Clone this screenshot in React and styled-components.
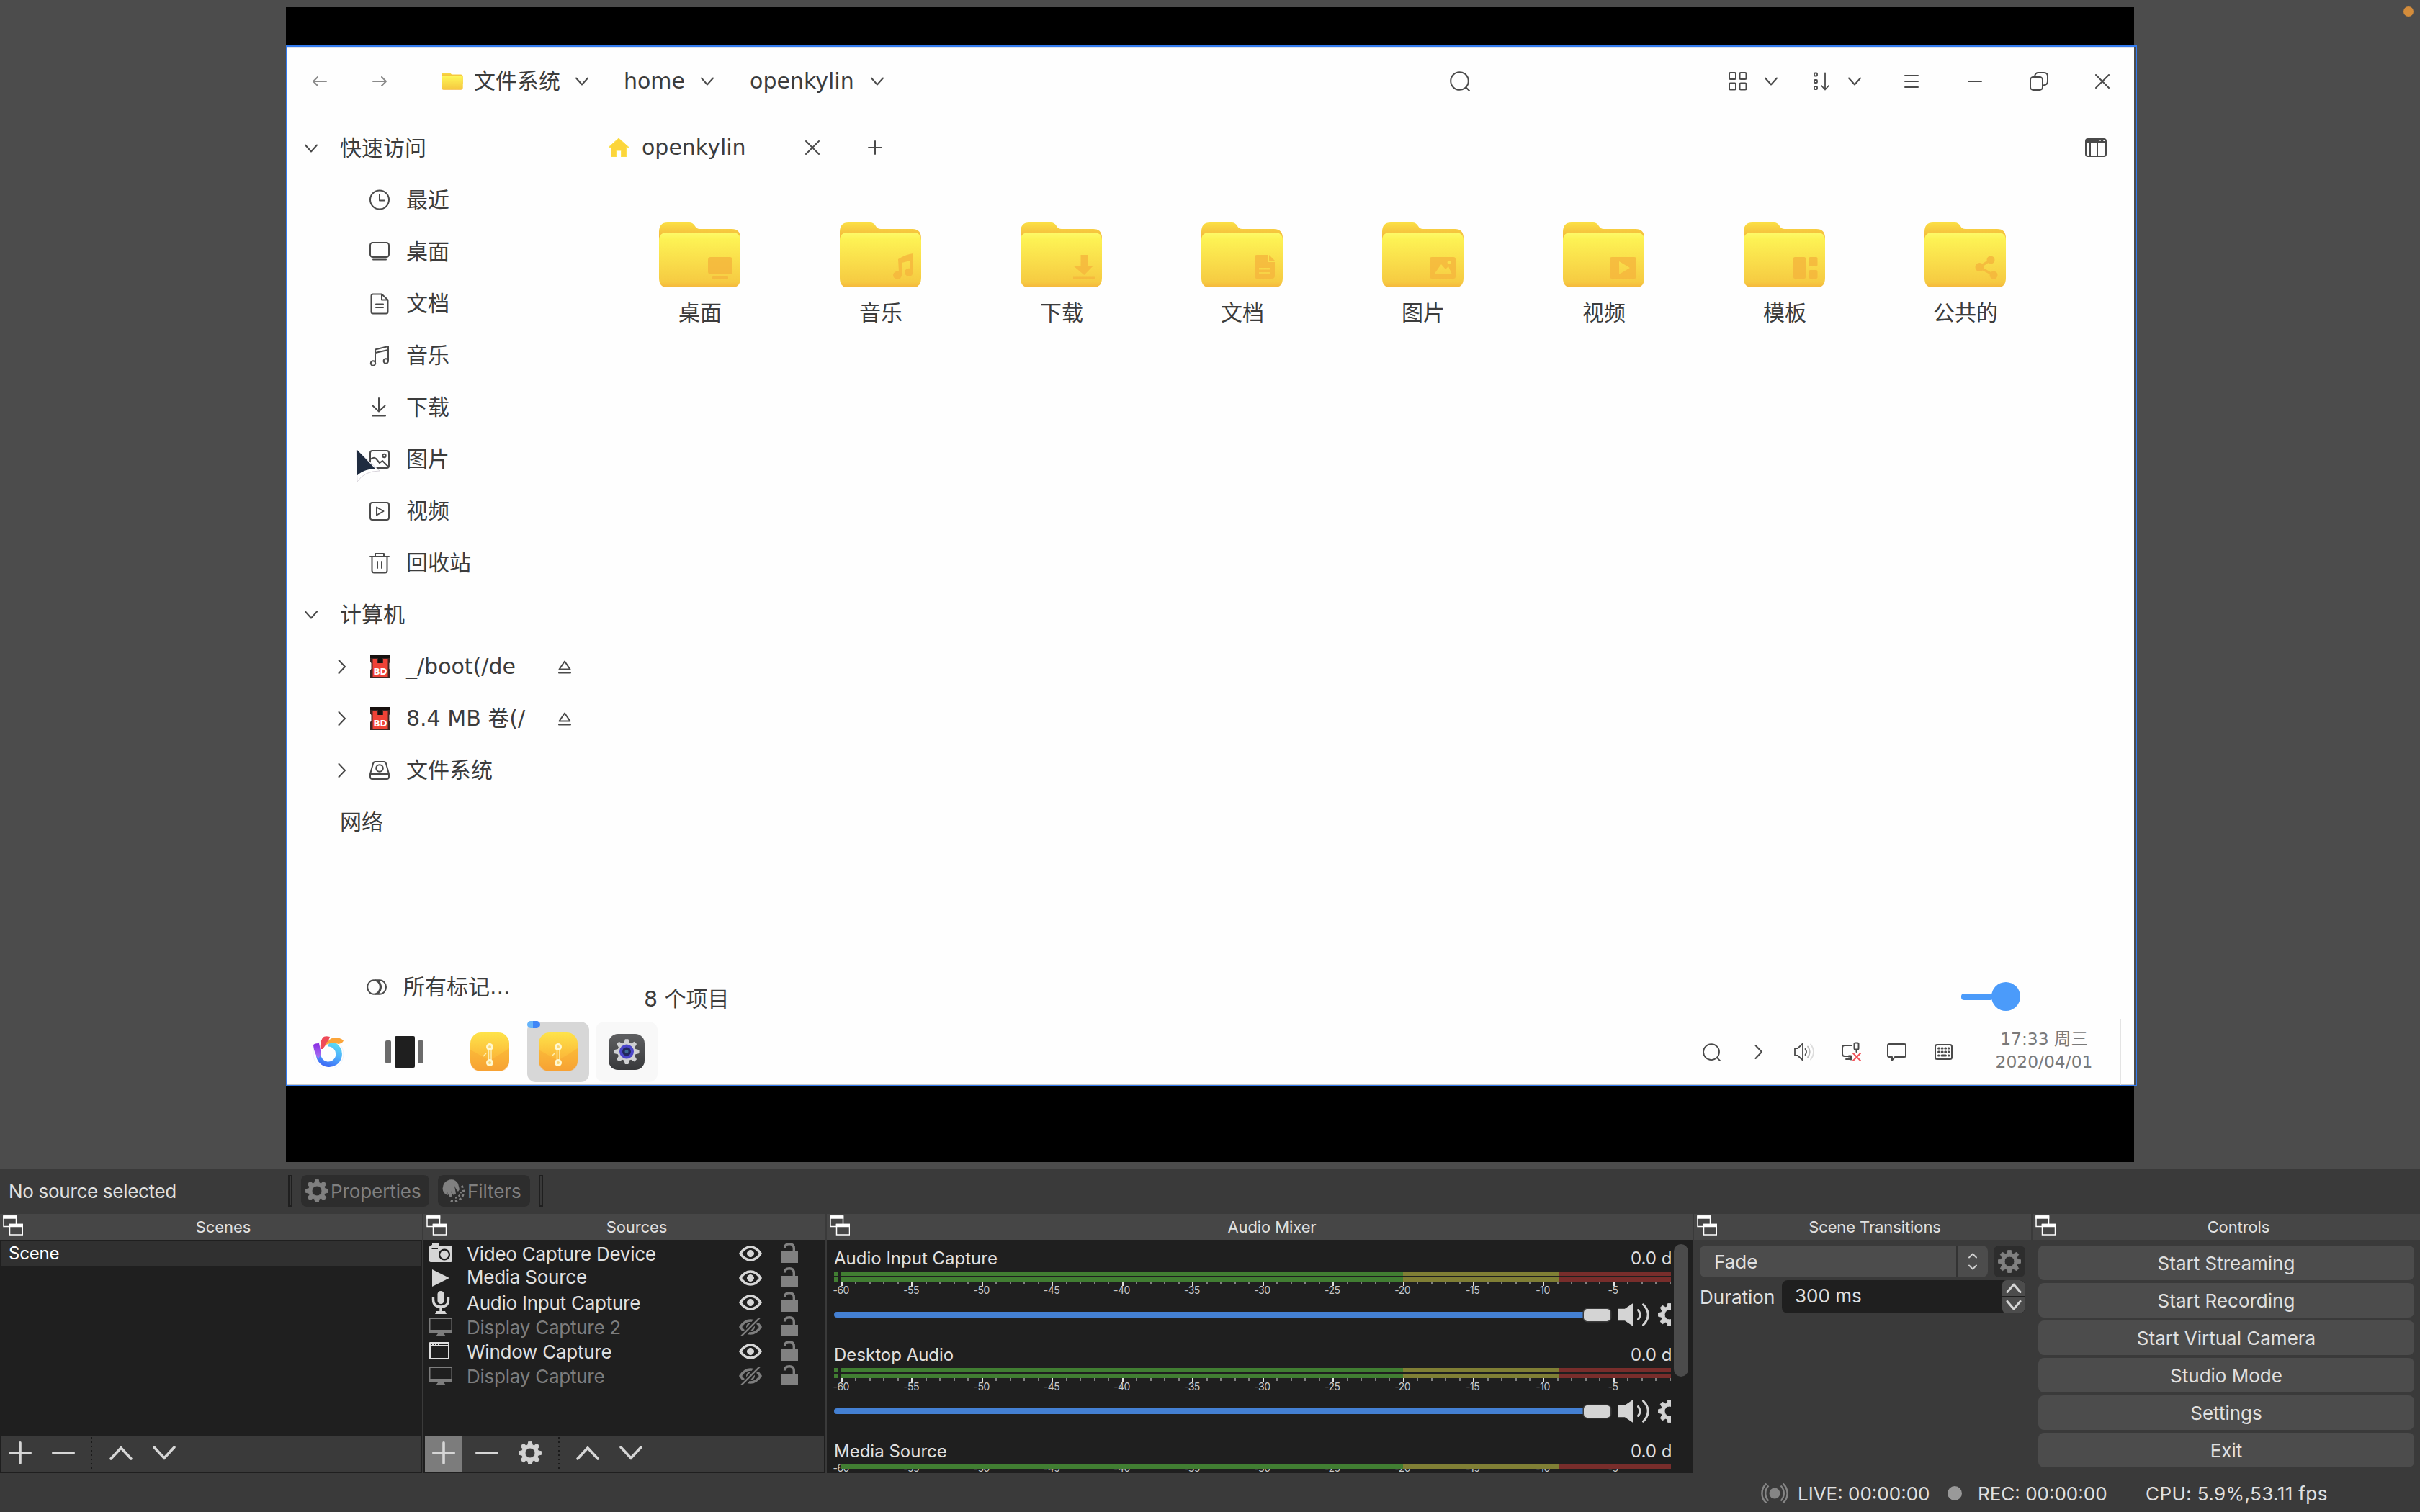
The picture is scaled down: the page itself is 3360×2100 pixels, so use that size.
import React from "react";
import styled, { createGlobalStyle } from "styled-components";

const GlobalStyle = createGlobalStyle`
  * { box-sizing: border-box; }
  body { margin: 0; background: #3a3a3a; }
  svg { display: block; flex: none; }
`;

/* ---------- shell ---------- */

const Screen = styled.div`
  width: 3360px;
  height: 2100px;
  display: flex;
  flex-direction: column;
  background: #3a3a3a;
  color: #e0e0e0;
  font-family: Inter, "Liberation Sans", sans-serif;
  font-size: 26px;
  overflow: hidden;
  position: relative;
  white-space: nowrap;
`;
const PrivacyDot = styled.span`
  position: absolute;
  top: 9px;
  right: 9px;
  width: 14px;
  height: 14px;
  border-radius: 50%;
  background: #d38c3b;
`;
const Preview = styled.section`
  height: 1624px;
  flex: none;
  background: #4c4c4c;
  padding: 10px 0 0 397px;
`;
const Canvas = styled.div`
  width: 2566px;
  height: 1604px;
  background: #000;
  padding-top: 53px;
`;
const Selection = styled.div`
  width: 2570px;
  height: 1446px;
  border: 2px solid #327bf0;
  background: #4c4c4c;
  padding-right: 2px;
`;

/* ---------- captured desktop ---------- */

const Desktop = styled.div`
  height: 1442px;
  background: #fefefe;
  box-shadow: inset 0 1px 0 #dfe3ec, inset 0 -1px 0 #c8c8c8;
  display: flex;
  flex-direction: column;
  font-family: "DejaVu Sans", "Noto Sans CJK SC", sans-serif;
  font-size: 30px;
  line-height: 36px;
  color: #3c3c3c;
`;
const TitleBar = styled.div`
  height: 105px;
  padding: 0 34px 9px 35px;
  display: flex;
  align-items: center;
`;
const Gap = styled.span`
  flex: none;
  width: ${(p) => p.$w}px;
`;
const Spacer = styled.span`
  flex: 1;
`;
const Body = styled.div`
  flex: 1;
  display: flex;
  min-height: 0;
`;
const Sidebar = styled.nav`
  width: 440px;
  display: flex;
  flex-direction: column;
`;
const Group = styled.div`
  height: 72px;
  display: flex;
  align-items: center;
  padding-left: 24px;
`;
const GroupToggle = styled.span`
  width: 49px;
`;
const Place = styled.div`
  height: 72px;
  display: flex;
  align-items: center;
  padding-left: 70px;
`;
const PlaceToggle = styled.span`
  width: 44px;
`;
const PlaceIcon = styled.span`
  width: 51px;
  position: relative;
`;
const PlaceName = styled.span`
  width: 211px;
`;
const Tags = styled(Group)`
  margin-top: auto;
  margin-bottom: 8px;
  padding-left: 110px;
  gap: 21px;
`;
const Pointer = styled.span`
  position: absolute;
  left: -19px;
  top: -1px;
`;
const Files = styled.div`
  flex: 1;
  display: flex;
  flex-direction: column;
`;
const TabBar = styled.div`
  height: 69px;
  display: flex;
  align-items: center;
  padding: 0 38px 0 5px;
`;
const FolderGrid = styled.div`
  display: grid;
  grid-template-columns: repeat(8, 251px);
  padding: 69px 0 0 7px;
`;
const FolderCell = styled.div`
  display: flex;
  flex-direction: column;
  align-items: center;
`;
const FolderName = styled.span`
  line-height: 40px;
  margin: 15px 0 0 1px;
`;
const FileStatus = styled.div`
  margin-top: auto;
  height: 62px;
  display: flex;
  align-items: center;
  justify-content: space-between;
  padding: 0 158px 0 55px;
`;
const ItemCount = styled.span`
  padding-top: 7px;
`;
const ZoomSlider = styled.div`
  display: flex;
  align-items: center;
`;
const ZoomTrack = styled.span`
  width: 44px;
  height: 9px;
  border-radius: 4px;
  margin-right: -2px;
  background: #4b9bfa;
`;
const ZoomKnob = styled.span`
  width: 40px;
  height: 40px;
  border-radius: 50%;
  background: #4b9bfa;
`;
const Taskbar = styled.div`
  height: 92px;
  display: flex;
  align-items: center;
  padding-left: 35px;
`;
const TaskTile = styled.div`
  width: 86px;
  height: 84px;
  border-radius: 12px;
  display: flex;
  align-items: center;
  justify-content: center;
  background: ${(p) => p.$bg || "transparent"};
  margin-right: ${(p) => p.$mr || 0}px;
  position: relative;
`;
const RunningDots = styled.span`
  position: absolute;
  left: 0;
  top: -1px;
  width: 18px;
  height: 10px;
  border-radius: 5px;
  background: linear-gradient(90deg, #66b4fa 45%, #3f86f7 45%);
`;
const Clock = styled.div`
  width: 180px;
  margin-right: 16px;
  text-align: center;
  font-size: 23.4px;
  line-height: 32px;
  color: #7a7a7a;
  padding-bottom: 5px;
`;
const ShowDesktop = styled.span`
  align-self: stretch;
  width: 19px;
  border-left: 1px solid #e4e4e4;
`;

/* ---------- source toolbar ---------- */

const ContextBar = styled.div`
  height: 62px;
  flex: none;
  display: flex;
  align-items: center;
  padding: 0 0 2px 12px;
`;
const ContextLabel = styled.span`
  width: 388px;
  letter-spacing: -0.3px;
`;
const Grip = styled.span`
  width: 6px;
  height: 44px;
  border: 2px solid #1f1f1f;
`;
const DisabledButton = styled.button`
  width: ${(p) => p.$w}px;
  height: 44px;
  margin: ${(p) => p.$m || "0"};
  padding: 0 0 0 6px;
  border: 0;
  border-radius: 8px;
  background: #2d2d2d;
  color: #808080;
  font: inherit;
  letter-spacing: -0.1px;
  display: flex;
  align-items: center;
  gap: 3px;
`;

/* ---------- docks ---------- */

const Docks = styled.div`
  height: 360px;
  flex: none;
  display: grid;
  grid-template-columns: 586px 558px 1202px 468px 538px;
  column-gap: 2px;
`;
const Dock = styled.section`
  display: flex;
  flex-direction: column;
  min-width: 0;
  height: 360px;
`;
const DockHeader = styled.header`
  height: 36px;
  flex: none;
  background: #464646;
  display: flex;
  padding: 2px 0 0 4px;
`;
const DockTitle = styled.span`
  flex: 1;
  margin-left: 2px;
  text-align: center;
  font-size: 22px;
  letter-spacing: -0.1px;
  line-height: 32px;
`;
const DarkBody = styled.div`
  flex: 1;
  min-height: 0;
  background: #1f1f1f;
  padding: 2px;
  display: flex;
  flex-direction: column;
`;
const SceneItem = styled.div`
  height: 34px;
  line-height: 34px;
  padding-left: 10px;
  background: #303030;
  color: #fff;
  font-size: 24px;
  letter-spacing: -0.2px;
`;
const ToolRow = styled.div`
  height: 50px;
  margin-top: auto;
  background: #3a3a3a;
  display: flex;
  align-items: center;
`;
const ToolButton = styled.button`
  width: ${(p) => p.$w || 60}px;
  height: 50px;
  padding: 0 0 2px;
  border: 0;
  background: ${(p) => (p.$on ? "#7c7c7c" : "transparent")};
  display: flex;
  align-items: center;
  justify-content: center;
`;
const DotRule = styled.span`
  width: 2px;
  height: 46px;
  margin: 0 9px;
  background: repeating-linear-gradient(#1a1a1a 0 2px, transparent 2px 6px);
`;
const SourceRow = styled.div`
  height: 34px;
  display: flex;
  align-items: center;
  padding-left: 6px;
  color: ${(p) => (p.$hidden ? "#7d7d7d" : "#e0e0e0")};
`;
const SourceName = styled.span`
  width: 378px;
  margin-left: 20px;
  line-height: 34px;
  letter-spacing: -0.25px;
  margin-top: ${(p) => (p.$raise ? "-2px" : "1px")};
`;
const EyeSlot = styled.span`
  margin-top: -1px;
`;
const LockSlot = styled.span`
  margin-left: 26px;
  margin-top: -3px;
`;

/* ---------- mixer ---------- */

const MixerBody = styled.div`
  flex: 1;
  min-height: 0;
  background: #1f1f1f;
  display: flex;
`;
const Strips = styled.div`
  width: 1172px;
  height: 322px;
  padding: 10px 0 0 10px;
  overflow: hidden;
`;
const Strip = styled.div`
  width: 1210px;
  height: 134px;
  font-size: 24px;
`;
const StripHead = styled.div`
  display: flex;
  height: 34px;
  line-height: 32px;
`;
const StripName = styled.span`
  width: 1106px;
`;
const Meter = styled.div`
  display: flex;
  flex-direction: column;
  gap: 2px;
  position: relative;
  z-index: 1;
`;
const MeterBar = styled.div`
  height: 6px;
  width: 1190px;
  background: ${(p) =>
    p.$solid
      ? "linear-gradient(90deg, transparent 10px, #417e32 10px 790px, #807f35 790px 1006px, #782d2b 1006px)"
      : "linear-gradient(90deg, #417e32 6px, #1f1f1f 6px 10px, #417e32 10px 790px, #807f35 790px 1006px, #782d2b 1006px)"};
`;
const ScaleLabels = styled.div`
  display: flex;
  margin-left: -39px;
  margin-top: ${(p) => (p.$under ? "-7px" : "-2px")};
  font-size: 14px;
  line-height: 12px;
  letter-spacing: -0.5px;
  color: #c8c8c8;
`;
const ScaleLabel = styled.span`
  width: 97.45px;
  flex: none;
  text-align: center;
`;
const VolumeRow = styled.div`
  display: flex;
  align-items: center;
  height: 32px;
  margin-top: 12px;
`;
const VolumeTrack = styled.span`
  width: 1041px;
  height: 8px;
  border-radius: 4px 0 0 4px;
  background: #4480d3;
`;
const VolumeKnob = styled.span`
  width: 37px;
  height: 17px;
  border-radius: 5px;
  background: #d4d4d4;
  box-shadow: 0 0 0 1.5px #3a3a3a;
  margin-right: 10px;
`;
const ScrollThumb = styled.span`
  width: 20px;
  height: 184px;
  margin: 6px 0 0 4px;
  border-radius: 10px;
  background: #4b4b4b;
`;

/* ---------- transitions and controls ---------- */

const TransitionBody = styled.div`
  padding: 8px 8px 0;
  display: flex;
  flex-direction: column;
  gap: 4px;
`;
const FormRow = styled.div`
  display: flex;
`;
const Combo = styled.div`
  width: 400px;
  height: 44px;
  margin-right: 8px;
  border-radius: 8px;
  background: #4c4c4c;
  display: flex;
  line-height: 45px;
  padding-left: 20px;
`;
const ComboValue = styled.span`
  width: 338px;
  border-right: 2px solid #333;
`;
const ComboArrow = styled.span`
  flex: 1;
  display: flex;
  align-items: center;
  justify-content: center;
`;
const FieldLabel = styled.span`
  width: 114px;
  line-height: 48px;
`;
const SpinBox = styled.div`
  width: 338px;
  height: 46px;
  border-radius: 8px;
  overflow: hidden;
  background: #1f1f1f;
  display: flex;
  line-height: 43px;
  padding-left: 18px;
`;
const SpinValue = styled.span`
  flex: 1;
`;
const SpinButtons = styled.span`
  width: 32px;
  display: flex;
  flex-direction: column;
  gap: 2px;
`;
const SpinButton = styled.span`
  height: 22px;
  background: #4c4c4c;
  border-radius: ${(p) => (p.$up ? "6px 8px 0 0" : "0 0 8px 6px")};
  display: flex;
  align-items: center;
  justify-content: center;
`;
const ControlList = styled.div`
  padding: 8px;
  display: flex;
  flex-direction: column;
  gap: 4px;
`;
const ControlButton = styled.button`
  height: 48px;
  padding: 0 0 0;
  border: 0;
  border-radius: 8px;
  background: #4c4c4c;
  color: #e0e0e0;
  font: inherit;
`;
const StatusBar = styled.footer`
  height: 54px;
  display: flex;
  align-items: center;
  padding: 2px 0 0 2445px;
  line-height: 40px;
`;
const StatusText = styled.span`
  width: ${(p) => p.$w}px;
  letter-spacing: ${(p) => p.$ls || 0}px;
  padding-top: 1px;
`;
const RecDot = styled.span`
  width: 20px;
  height: 20px;
  margin-right: 22px;
  border-radius: 50%;
  background: #999;
`;

/* ---------- icons ---------- */

const Line = ({ w = 30, h = 30, c = "#4a4a4a", sw = 2, children }) => (
  <svg width={w} height={h} viewBox={`0 0 ${w} ${h}`} fill="none" stroke={c} strokeWidth={sw} strokeLinejoin="round" strokeLinecap="round">
    {children}
  </svg>
);

const gearPath = (() => {
  const pts = [];
  for (let i = 0; i < 8; i++) {
    [[-0.29, 11.6], [-0.13, 16], [0.13, 16], [0.29, 11.6]].forEach(([da, r]) => {
      const a = (i * Math.PI) / 4 + da;
      pts.push(`${(16 + r * Math.sin(a)).toFixed(2)} ${(16 - r * Math.cos(a)).toFixed(2)}`);
    });
  }
  return `M${pts.join("L")}Z M16 9a7 7 0 1 0 0 14a7 7 0 1 0 0-14Z`;
})();
const Gear = ({ c = "#d2d2d2", s = 32 }) => (
  <svg width={s} height={s} viewBox="0 0 32 32" fill={c} stroke={c} strokeWidth="1" strokeLinejoin="round">
    <path fillRule="evenodd" d={gearPath} />
  </svg>
);
const ChevDown = () => <Line w={18} h={12}><path d="M1 1.5L9 10.5L17 1.5" /></Line>;
const ChevRight = () => <Line w={12} h={20}><path d="M1.500 1L10 10L1.500 19" /></Line>;
const Cross = () => <Line w={20} h={20}><path d="M1 1L19 19M19 1L1 19" /></Line>;
const Magnifier = ({ s = 28 }) => (
  <svg width={s} height={s} viewBox="0 0 28 28" fill="none" stroke="#4a4a4a" strokeWidth="2" strokeLinecap="round">
    <circle cx="13.5" cy="13.5" r="12.3" />
    <path d="M22.5 22.5L27 27" />
  </svg>
);
const ArrowLeft = () => <Line w={20} h={14} c="#8a8a8a"><path d="M1 7H19M7 1L1 7L7 13" /></Line>;
const ArrowRight = () => <Line w={20} h={14} c="#8a8a8a"><path d="M1 7H19M13 1L19 7L13 13" /></Line>;
const Eject = () => <Line w={18} h={19}><path d="M9 1.5L16.5 12.5H1.5ZM1 17.5H17" /></Line>;

const placeIcons = {
  clock: <Line w={28}><circle cx="14" cy="14.500" r="13" /><path d="M14 7V15.500H21" /></Line>,
  screen: <Line w={28} h={28}><rect x="1" y="1" width="26" height="20" rx="3.5" /><path d="M5 24.500H23" /></Line>,
  doc: <Line w={28}><path d="M4.500 1.500H17L25.500 9.500V26Q25.500 28.500 23 28.500H5Q2.500 28.500 2.500 26V4Q2.500 1.500 5 1.500M17 1.500V9.500H25.500M9 15.500H19M9 20H19" /></Line>,
  music: <Line w={28}><path d="M8 25V6.500L26 2V22M8 11L26 7" /><circle cx="5" cy="25.500" r="3.200" /><circle cx="22.800" cy="22.500" r="3.200" /></Line>,
  down: <Line w={28} h={28}><path d="M13 1V19M4.500 11.500L13 19.500L21.500 11.500M4 25.500H22" /></Line>,
  picture: <Line w={28} h={26}><rect x="1" y="1" width="26" height="24" rx="3" /><circle cx="20.500" cy="8" r="2.200" /><path d="M1 13Q6 9 9 12L14 18L18 15L22 19L26 23" /></Line>,
  video: <Line w={28} h={26}><rect x="1" y="1" width="26" height="24" rx="3" /><path d="M10 7.500L19.500 13L10 18.500Z" /></Line>,
  trash: <Line w={28}><path d="M1 6H27M3.500 6V25.500Q3.500 28.500 6.500 28.500H21.500Q24.500 28.500 24.500 25.500V6M8 6V2H20V6M11 13V22M17 13V22" /></Line>,
  disk: <Line w={28} h={26}><path d="M1 18L5 3.500Q5.700 1 8 1H20Q22.300 1 23 3.500L27 18V22Q27 25 24 25H4Q1 25 1 22ZM1.500 18H26.500" /><circle cx="14" cy="10" r="4.800" /></Line>,
};

const SdCard = () => (
  <svg width="30" height="34" viewBox="0 0 30 34">
    <path d="M1 1H29V10L27.500 12V20L29 22V33H1V22L2.500 20V12L1 10Z" fill="#3f2623" />
    <path d="M4.500 6H10V12H19V6H25.500V31H4.500Z" fill="#ef4236" />
    <rect x="1" y="1" width="28" height="4" fill="#17110f" />
    <rect x="12" y="5" width="5" height="7" fill="#17110f" />
    <text x="15" y="28" textAnchor="middle" fontFamily="DejaVu Sans" fontWeight="bold" fontSize="12" fill="#fff">BD</text>
  </svg>
);

const emblems = {
  desktop: <><rect x="68" y="49" width="34" height="24" rx="4" /><rect x="74" y="76" width="22" height="3.500" rx="1" /></>,
  music: <path d="M81 52Q92 45 102 44V70A6 5.500 0 1 1 98 65V54L86 57V74A6 5.500 0 1 1 82 69Z" />,
  download: <path d="M83.500 46H93V61H101L88.300 74L73 61H83.500ZM73 76.500H104V79.500H73Z" />,
  document: <path fillRule="evenodd" d="M77 46H92V56H102V75Q102 79 98 79H77Q74 79 74 75V49Q74 46 77 46ZM94 46L102 54H94ZM80 64H96V66.500H80ZM80 70H96V72.500H80Z" />,
  picture: <path fillRule="evenodd" d="M69 49H99Q102 49 102 52V76Q102 79 99 79H69Q66 79 66 76V52Q66 49 69 49ZM72 73L82 59L88 66L92 62L97 73ZM93 54a2.500 2.500 0 1 0 .1 0Z" />,
  video: <path fillRule="evenodd" d="M68 49H99Q102 49 102 52V76Q102 79 99 79H68Q65 79 65 76V52Q65 49 68 49ZM78 55V73L93 64Z" />,
  template: <><rect x="69" y="49" width="17" height="30" rx="2" /><rect x="90.500" y="49" width="12" height="13" rx="2" /><rect x="90.500" y="67" width="12" height="12" rx="2" /></>,
  share: <><circle cx="76.500" cy="63" r="6" /><circle cx="92" cy="53" r="5.500" /><circle cx="96" cy="74" r="5.500" /><path d="M76 63L92 53M76 63L96 74" stroke="#f5b53c" strokeWidth="3.500" /></>,
};

const Folder = ({ kind, id, w = 114, h = 92 }) => (
  <svg width={w} height={h} viewBox="0 0 114 92" preserveAspectRatio="none">
    <defs>
      <linearGradient id={`back-${id}`} x1="0" y1="0" x2="0" y2="1">
        <stop offset="0" stopColor="#fbdf45" />
        <stop offset="0.3" stopColor="#f4bd3b" />
        <stop offset="1" stopColor="#f4bd3b" />
      </linearGradient>
      <linearGradient id={`front-${id}`} x1="0" y1="0" x2="0" y2="1">
        <stop offset="0" stopColor="#fdfa6a" />
        <stop offset="0.12" stopColor="#fdf254" />
        <stop offset="0.9" stopColor="#f6cb42" />
        <stop offset="1" stopColor="#f5b73c" />
      </linearGradient>
    </defs>
    <path d="M0 14Q0 1 12 1H42Q47 1 50 6Q52 10 57 10H101Q113 10 113 23V60H0Z" fill={`url(#back-${id})`} />
    <path d="M0 26Q0 15 11 15H102Q113 15 113 26V78Q113 91 102 91H11Q0 91 0 78Z" fill={`url(#front-${id})`} />
    <g fill="#f5b53c" opacity="0.8">{emblems[kind]}</g>
  </svg>
);

const HomeIcon = () => (
  <svg width="30" height="26" viewBox="0 0 30 26">
    <path d="M15 0L29 12.500H25.500V26H18.500V17H11.500V26H4.500V12.500H1Z" fill="#fcd53c" stroke="#fce14e" strokeLinejoin="round" />
  </svg>
);
const KylinLogo = () => (
  <svg width="44" height="46" viewBox="0 0 44 46" fill="none">
    <defs>
      <linearGradient id="ring" x1="0.700" y1="0" x2="0.300" y2="1">
        <stop offset="0" stopColor="#5ee0f2" />
        <stop offset="0.45" stopColor="#4fb2fb" />
        <stop offset="1" stopColor="#3c63f6" />
      </linearGradient>
      <linearGradient id="petal" x1="0" y1="0" x2="0" y2="1">
        <stop offset="0" stopColor="#8a2be2" />
        <stop offset="1" stopColor="#a97bf5" />
      </linearGradient>
    </defs>
    <circle cx="22" cy="26" r="21" stroke="#f0f3fb" strokeWidth="1" />
    <path d="M27 8.500A18 18 0 1 1 5 24Q8 20 11.500 24A10.500 10.500 0 1 0 22 15.500Q21 11 27 8.500Z" fill="url(#ring)" />
    <path d="M1 14Q1 11 9 11L12 25Q9 31 8 33Q2 24 1 14Z" fill="url(#petal)" />
    <path d="M14 3Q17 0 24 2Q22 9 14 19L11 19Q10 10 14 3Z" fill="#ee4a58" />
    <path d="M17 14Q22 4 31 3Q38 3 43 7Q42 11 36 12Q27 8 17 14Z" fill="#fba53a" />
  </svg>
);
const TaskView = () => (
  <svg width="54" height="46" viewBox="0 0 54 46">
    <rect x="0" y="7" width="8" height="32" rx="2" fill="#6b6b6b" />
    <rect x="13" y="1" width="28" height="44" rx="2" fill="#1f1f1f" />
    <rect x="45" y="7" width="8" height="32" rx="2" fill="#6b6b6b" />
  </svg>
);
const FilesApp = ({ id }) => (
  <svg width="54" height="54" viewBox="0 0 54 54">
    <defs>
      <linearGradient id={id} x1="0" y1="0" x2="0" y2="1">
        <stop offset="0" stopColor="#fee34a" />
        <stop offset="0.5" stopColor="#fcc23c" />
        <stop offset="1" stopColor="#f7a236" />
      </linearGradient>
    </defs>
    <rect width="54" height="54" rx="15" fill={`url(#${id})`} />
    <path d="M0 24L27 39L54 22V39Q54 54 39 54H15Q0 54 0 39Z" fill="#f6a032" opacity="0.35" />
    <path d="M25.500 20V42M22 29L18 33M29 20V42" stroke="#fdeeb0" strokeWidth="1.500" fill="none" />
    <circle cx="27" cy="20" r="5" fill="#fff8cf" />
    <circle cx="27" cy="42" r="5" fill="#fff8cf" />
    <circle cx="27" cy="20" r="2" fill="#fbd774" />
    <circle cx="27" cy="42" r="2" fill="#fbd774" />
  </svg>
);
const SettingsApp = () => (
  <svg width="50" height="50" viewBox="0 0 50 50">
    <defs>
      <linearGradient id="prefs" x1="0" y1="0" x2="0" y2="1">
        <stop offset="0" stopColor="#5e5f61" />
        <stop offset="1" stopColor="#38393b" />
      </linearGradient>
    </defs>
    <rect width="50" height="50" rx="13" fill="url(#prefs)" />
    <g transform="translate(7.500 7) scale(1.100)" fill="#cfd0d2"><path fillRule="evenodd" d={gearPath} /></g>
    <circle cx="25" cy="24.500" r="10" fill="#4b46c9" />
    <circle cx="25" cy="24.500" r="6" fill="#20275e" />
    <circle cx="25" cy="24.500" r="2.500" fill="#3c6b93" />
  </svg>
);
const GridView = () => (
  <Line w={26} h={26}>
    <rect x="1" y="1" width="9" height="9" rx="1.500" /><rect x="15.500" y="1" width="9" height="9" rx="1.500" />
    <rect x="1" y="15.500" width="9" height="9" rx="1.500" /><rect x="15.500" y="15.500" width="9" height="9" rx="1.500" />
  </Line>
);
const SortIcon = () => (
  <Line w={24} h={26} sw={1.8}>
    <rect x="1" y="1.500" width="4" height="4" rx="1" /><rect x="1" y="11" width="4" height="4" rx="1" /><rect x="1" y="20" width="4" height="4" rx="1" />
    <path d="M16 1.500V24.500M11 19L16 24.500L21 19" />
  </Line>
);
const Restore = () => (
  <Line w={26} h={26}><rect x="1" y="7" width="17" height="18" rx="4" /><path d="M7 6Q8 1 12 1H20Q25 1 25 6V13Q25 18 19 18.500" /></Line>
);
const Columns = () => (
  <Line w={30} h={26}><rect x="1" y="1" width="28" height="24" rx="3" /><path d="M2 5H28M7 5V25M17 5V25" /><path d="M3 3H19M23 3H24" strokeWidth="3" /></Line>
);
const Speaker = () => (
  <Line w={30} h={26} sw={1.8}>
    <path d="M1 8H5L12 1.500V24.500L5 18H1ZM15.500 9Q18.500 13 15.500 17" />
    <path d="M19 5.500Q24.500 13 19 20.500" stroke="#bbb" /><path d="M23 2.500Q31 13 23 23.500" stroke="#ddd" />
  </Line>
);
const NetworkOff = () => (
  <Line w={28} h={28}>
    <path d="M14 5H4Q1 5 1 8V17Q1 20 4 20H9M6 24H12" /><path d="M10 20H13V24" strokeWidth="3" />
    <rect x="17.500" y="1.500" width="6" height="9" rx="1.500" /><path d="M20.500 11V14" />
    <path d="M16 16L26 26M26 16L16 26" stroke="#f2545b" />
  </Line>
);
const Chat = () => <Line w={27} h={26}><path d="M3 2H24Q26 2 26 4V18Q26 20 24 20H11L7 24.500V20H3Q1 20 1 18V4Q1 2 3 2Z" /></Line>;
const Keyboard = () => (
  <Line w={26} h={22}><rect x="1" y="1" width="23" height="20" rx="2.500" /><path d="M5.500 6H20M5.500 11H20" strokeDasharray="1 3.600" strokeWidth="3" /><path d="M5.500 16H6M10 16H15.500M19.500 16H20" strokeWidth="3" /></Line>
);
const TagIcon = () => <Line w={30} h={22}><ellipse cx="10" cy="11" rx="8.800" ry="9.800" /><path d="M12 1.200H18A9 9.800 0 0 1 18 20.800H12M16 2Q24 11 16 20" /></Line>;
const Arrow = () => (
  <svg width="36" height="46" viewBox="0 0 36 46">
    <path d="M1 1L33 30Q12 30 2 45Z" fill="#fff" stroke="#d9d5dc" />
    <path d="M1 0L27 27Q12 27 1 37Z" fill="#1f2c40" />
  </svg>
);

const PopOut = () => (
  <svg width="28" height="30" viewBox="0 0 28 30" fill="#464646" stroke="#fff" strokeWidth="1.500">
    <rect x="1" y="1" width="17.500" height="14.500" /><rect x="1" y="1" width="17.500" height="3" fill="#fff" />
    <rect x="9.500" y="12.500" width="18" height="14.500" /><rect x="9.500" y="12.500" width="18" height="3" fill="#fff" />
  </svg>
);
const Tool = ({ d }) => (
  <svg width="32" height="32" viewBox="0 0 32 32" fill="none" stroke="#d6d6d6" strokeWidth="3.600" strokeLinecap="round" strokeLinejoin="miter">
    <path d={d} />
  </svg>
);
const PLUS = "M16 1.800V30.200M1.800 16H30.200";
const MINUS = "M1.800 16H30.200";
const UP = "M2 24L16 9L30 24";
const DOWN = "M2 8L16 23L30 8";

const Eye = ({ off }) => (
  <svg width="32" height="24" viewBox="0 0 32 24" fill="none" stroke={off ? "#7d7d7d" : "#d6d6d6"}>
    <path d="M2 12Q8 3 16 3Q24 3 30 12Q24 21 16 21Q8 21 2 12Z" strokeWidth="3.600" strokeLinejoin="round" />
    <circle cx="16" cy="12" r="4.500" fill={off ? "none" : "#d6d6d6"} strokeWidth={off ? 3 : 1} />
    {off && <><path d="M4 26L28 -2" stroke="#1f1f1f" strokeWidth="7" /><path d="M3 25L29 -1" strokeWidth="2.400" /></>}
  </svg>
);
const Lock = () => (
  <svg width="24" height="28" viewBox="0 0 24 28">
    <rect x="0" y="12" width="24" height="16" fill="#818181" />
    <path d="M5.500 7.500Q5.500 1.700 12 1.700Q18.300 1.700 18.300 8V13" fill="none" stroke="#818181" strokeWidth="3.400" />
  </svg>
);
const sourceIcons = {
  camera: <svg width="32" height="28" viewBox="0 0 32 28"><path fillRule="evenodd" fill="#d6d6d6" d="M2 3L4 2V0H13V3H30Q32 3 32 5V24Q32 26 30 26H2Q0 26 0 24V5Q0 3 2 3ZM3.500 6V8H12V6ZM21 7.500a8 8 0 1 0 .1 0Z" /><circle cx="21" cy="15.500" r="5.800" fill="#d6d6d6" /></svg>,
  play: <svg width="32" height="28" viewBox="0 0 32 28"><path d="M4 2L28 14L4 26Z" fill="#d6d6d6" /></svg>,
  mic: <svg width="32" height="32" viewBox="0 0 32 32"><rect x="11.500" y="0" width="9" height="18" rx="4.500" fill="#d6d6d6" /><path d="M5.500 9V12Q5.500 22 16 22Q26.500 22 26.500 12V9M16 22V28" fill="none" stroke="#d6d6d6" strokeWidth="3.400" /><path d="M8 32L10 28H22L24 32Z" fill="#d6d6d6" /></svg>,
  display: <svg width="32" height="28" viewBox="0 0 32 28"><path fillRule="evenodd" fill="#7d7d7d" d="M0 1H32V23H0ZM1.500 3V18H30.500V3ZM12 23H20L23 27H9Z" /></svg>,
  window: <svg width="32" height="26" viewBox="0 0 32 26"><path fillRule="evenodd" fill="#e0e0e0" d="M1 0H27Q28 0 28 1V24H0V1Q0 0 1 0ZM2 6V22H26V6ZM2 2V4H4V2ZM6 2V4H8V2ZM10 2V4H12V2ZM14 2V4H26V2Z" /></svg>,
};
const FilterIcon = () => (
  <svg width="32" height="32" viewBox="0 0 32 32" fill="none" stroke="#808080">
    <path d="M0.500 13Q1 3 10 0.500Q18 -1 22 6L24 14L22 17Q19 14 17 9L19 20L16 22Q12 18 11 12L14 23L11 25Q7 20 6 14L8 22Q1 20 0.500 13Z" fill="#808080" stroke="none" />
    <path d="M27 9A13.500 13.500 0 0 1 9 28.500" strokeWidth="3" strokeDasharray="3.200 3" />
    <path d="M26 17A10 10 0 0 1 16 26" strokeWidth="2.400" strokeDasharray="2.500 2.500" />
  </svg>
);
const Volume = () => (
  <svg width="44" height="32" viewBox="0 0 44 32" fill="none" stroke="#d4d4d4" strokeWidth="3" strokeLinecap="round">
    <path d="M1 8.500H10L21 1V31L10 23.500H1Z" fill="#d4d4d4" strokeWidth="1.500" strokeLinejoin="round" />
    <path d="M28.500 9.500Q33.500 16 28.500 22.500M35.500 1.800Q49 16 35.500 30.200" />
  </svg>
);
const Ticks = () => (
  <svg width="1190" height="8" viewBox="0 0 1190 8" shapeRendering="crispEdges">
    {Array.from({ length: 61 }, (_, i) => (
      <rect key={i} x={Math.round(10 + i * 19.49)} y="0" width="2" height={i % 5 ? 4 : 6} fill={i % 5 ? "#808080" : "#e4e4e4"} />
    ))}
  </svg>
);
const LiveIcon = () => (
  <svg width="38" height="28" viewBox="0 0 38 28" fill="none" stroke="#858585" strokeWidth="2.400">
    <circle cx="19" cy="14" r="7.500" fill="#858585" stroke="none" />
    <path d="M10.500 3.500A15 15 0 0 0 10.500 24.500M27.500 3.500A15 15 0 0 1 27.500 24.500M7.500 0.500A18 18 0 0 0 7.500 27.500M30.500 0.500A18 18 0 0 1 30.500 27.500" />
  </svg>
);

/* ---------- data ---------- */

const quickPlaces = [
  ["clock", "最近"], ["screen", "桌面"], ["doc", "文档"], ["music", "音乐"],
  ["down", "下载"], ["picture", "图片"], ["video", "视频"], ["trash", "回收站"],
];
const folders = [
  ["desktop", "桌面"], ["music", "音乐"], ["download", "下载"], ["document", "文档"],
  ["picture", "图片"], ["video", "视频"], ["template", "模板"], ["share", "公共的"],
];
const sources = [
  { icon: "camera", name: "Video Capture Device" },
  { icon: "play", name: "Media Source", raise: true },
  { icon: "mic", name: "Audio Input Capture" },
  { icon: "display", name: "Display Capture 2", hidden: true },
  { icon: "window", name: "Window Capture" },
  { icon: "display", name: "Display Capture", hidden: true },
];
const scale = [-60, -55, -50, -45, -40, -35, -30, -25, -20, -15, -10, -5];
const controls = ["Start Streaming", "Start Recording", "Start Virtual Camera", "Studio Mode", "Settings", "Exit"];

/* ---------- parts ---------- */

const DockPanel = ({ title, children }) => (
  <Dock>
    <DockHeader><PopOut /><DockTitle>{title}</DockTitle></DockHeader>
    {children}
  </Dock>
);
const Labels = ({ under }) => (
  <ScaleLabels $under={under}>{scale.map((n) => <ScaleLabel key={n}>{n}</ScaleLabel>)}</ScaleLabels>
);
const MixerStrip = ({ name, cut }) => (
  <Strip>
    <StripHead><StripName>{name}</StripName><span>0.0 dB</span></StripHead>
    {cut ? (
      <>
        <Meter><MeterBar $solid /></Meter>
        <Labels under />
      </>
    ) : (
      <>
        <Meter><MeterBar /><MeterBar /></Meter>
        <Ticks />
        <Labels />
        <VolumeRow><VolumeTrack /><VolumeKnob /><Volume /><Gap $w={12} /><Gear /></VolumeRow>
      </>
    )}
  </Strip>
);
const Drive = ({ icon, name, eject }) => (
  <Place>
    <PlaceToggle><ChevRight /></PlaceToggle>
    <PlaceIcon>{icon}</PlaceIcon>
    <PlaceName>{name}</PlaceName>
    {eject && <Eject />}
  </Place>
);

const FileManager = () => (
  <Desktop>
    <TitleBar>
      <ArrowLeft /><Gap $w={63} /><ArrowRight /><Gap $w={76} />
      <Folder id="crumb" w={30} h={24} /><Gap $w={15} />
      <span>文件系统</span><Gap $w={21} /><ChevDown /><Gap $w={49} />
      <span>home</span><Gap $w={22} /><ChevDown /><Gap $w={50} />
      <span>openkylin</span><Gap $w={23} /><ChevDown />
      <Spacer />
      <Magnifier /><Gap $w={359} />
      <GridView /><Gap $w={24} /><ChevDown /><Gap $w={50} />
      <SortIcon /><Gap $w={24} /><ChevDown /><Gap $w={60} />
      <Line w={20} h={20}><path d="M1 2H19M1 10H19M1 18H19" /></Line><Gap $w={68} />
      <Line w={20} h={4}><path d="M1 2H19" /></Line><Gap $w={66} />
      <Restore /><Gap $w={65} /><Cross />
    </TitleBar>
    <Body>
      <Sidebar>
        <Group><GroupToggle><ChevDown /></GroupToggle>快速访问</Group>
        {quickPlaces.map(([icon, name]) => (
          <Place key={name}>
            <PlaceToggle />
            <PlaceIcon>
              {placeIcons[icon]}
              {icon === "picture" && <Pointer><Arrow /></Pointer>}
            </PlaceIcon>
            <PlaceName>{name}</PlaceName>
          </Place>
        ))}
        <Group><GroupToggle><ChevDown /></GroupToggle>计算机</Group>
        <Drive icon={<SdCard />} name="_/boot(/de" eject />
        <Drive icon={<SdCard />} name="8.4 MB 卷(/" eject />
        <Drive icon={placeIcons.disk} name="文件系统" />
        <Group><GroupToggle />网络</Group>
        <Tags><TagIcon /><span>所有标记...</span></Tags>
      </Sidebar>
      <Files>
        <TabBar>
          <HomeIcon /><Gap $w={17} /><span>openkylin</span><Gap $w={82} /><Cross /><Gap $w={67} />
          <Line w={20} h={20}><path d="M10 1V19M1 10H19" /></Line>
          <Spacer /><Columns />
        </TabBar>
        <FolderGrid>
          {folders.map(([kind, name]) => (
            <FolderCell key={kind}><Folder kind={kind} id={kind} /><FolderName>{name}</FolderName></FolderCell>
          ))}
        </FolderGrid>
        <FileStatus>
          <ItemCount>8 个项目</ItemCount>
          <ZoomSlider><ZoomTrack /><ZoomKnob /></ZoomSlider>
        </FileStatus>
      </Files>
    </Body>
    <Taskbar>
      <KylinLogo /><Gap $w={57} /><TaskView /><Gap $w={48} />
      <TaskTile $mr={9}><FilesApp id="files-a" /></TaskTile>
      <TaskTile $bg="#d7d7d7" $mr={9}><RunningDots /><FilesApp id="files-b" /></TaskTile>
      <TaskTile $bg="#f8f8f8"><SettingsApp /></TaskTile>
      <Spacer />
      <Magnifier s={25} /><Gap $w={47} /><ChevRight /><Gap $w={43} />
      <Speaker /><Gap $w={36} /><NetworkOff /><Gap $w={35} />
      <Chat /><Gap $w={39} /><Keyboard /><Gap $w={36} />
      <Clock><div>17:33 周三</div><div>2020/04/01</div></Clock>
      <ShowDesktop />
    </Taskbar>
  </Desktop>
);

export default function App() {
  return (
    <Screen>
      <GlobalStyle />
      <PrivacyDot />
      <Preview>
        <Canvas><Selection><FileManager /></Selection></Canvas>
      </Preview>

      <ContextBar>
        <ContextLabel>No source selected</ContextLabel>
        <Grip />
        <DisabledButton $w={178} $m="0 12px"><Gear c="#808080" />Properties</DisabledButton>
        <DisabledButton $w={128} $m="0 12px 0 0"><FilterIcon />Filters</DisabledButton>
        <Grip />
      </ContextBar>

      <Docks>
        <DockPanel title="Scenes">
          <DarkBody>
            <SceneItem>Scene</SceneItem>
            <ToolRow>
              <ToolButton $w={52}><Tool d={PLUS} /></ToolButton><Gap $w={8} />
              <ToolButton $w={52}><Tool d={MINUS} /></ToolButton><Gap $w={3} />
              <DotRule /><Gap $w={1} />
              <ToolButton><Tool d={UP} /></ToolButton>
              <ToolButton><Tool d={DOWN} /></ToolButton>
            </ToolRow>
          </DarkBody>
        </DockPanel>

        <DockPanel title="Sources">
          <DarkBody>
            {sources.map((s) => (
              <SourceRow key={s.name} $hidden={s.hidden}>
                {sourceIcons[s.icon]}
                <SourceName $raise={s.raise}>{s.name}</SourceName>
                <EyeSlot><Eye off={s.hidden} /></EyeSlot>
                <LockSlot><Lock /></LockSlot>
              </SourceRow>
            ))}
            <ToolRow>
              <ToolButton $w={52} $on><Tool d={PLUS} /></ToolButton><Gap $w={4} />
              <ToolButton><Tool d={MINUS} /></ToolButton>
              <ToolButton><Gear /></ToolButton>
              <DotRule />
              <ToolButton><Tool d={UP} /></ToolButton>
              <ToolButton><Tool d={DOWN} /></ToolButton>
            </ToolRow>
          </DarkBody>
        </DockPanel>

        <DockPanel title="Audio Mixer">
          <MixerBody>
            <Strips>
              <MixerStrip name="Audio Input Capture" />
              <MixerStrip name="Desktop Audio" />
              <MixerStrip name="Media Source" cut />
            </Strips>
            <ScrollThumb />
          </MixerBody>
        </DockPanel>

        <DockPanel title="Scene Transitions">
          <TransitionBody>
            <FormRow>
              <Combo>
                <ComboValue>Fade</ComboValue>
                <ComboArrow><Line w={12} h={24} c="#d0d0d0"><path d="M1 6.500L6 1.500L11 6.500M1 17.500L6 22.500L11 17.500" /></Line></ComboArrow>
              </Combo>
              <DisabledButton $w={44}><Gear c="#808080" /></DisabledButton>
            </FormRow>
            <FormRow>
              <FieldLabel>Duration</FieldLabel>
              <SpinBox>
                <SpinValue>300 ms</SpinValue>
                <SpinButtons>
                  <SpinButton $up><Line w={22} h={14} c="#d6d6d6" sw={3}><path d="M2 12.500L11 2L20 12.500" /></Line></SpinButton>
                  <SpinButton><Line w={22} h={14} c="#d6d6d6" sw={3}><path d="M2 1.500L11 12L20 1.500" /></Line></SpinButton>
                </SpinButtons>
              </SpinBox>
            </FormRow>
          </TransitionBody>
        </DockPanel>

        <DockPanel title="Controls">
          <ControlList>{controls.map((c) => <ControlButton key={c}>{c}</ControlButton>)}</ControlList>
        </DockPanel>
      </Docks>

      <StatusBar>
        <LiveIcon /><Gap $w={13} />
        <StatusText $w={208}>LIVE: 00:00:00</StatusText>
        <RecDot />
        <StatusText $w={233}>REC: 00:00:00</StatusText>
        <StatusText $w={270} $ls={0.4}>CPU: 5.9%,53.11 fps</StatusText>
      </StatusBar>
    </Screen>
  );
}
